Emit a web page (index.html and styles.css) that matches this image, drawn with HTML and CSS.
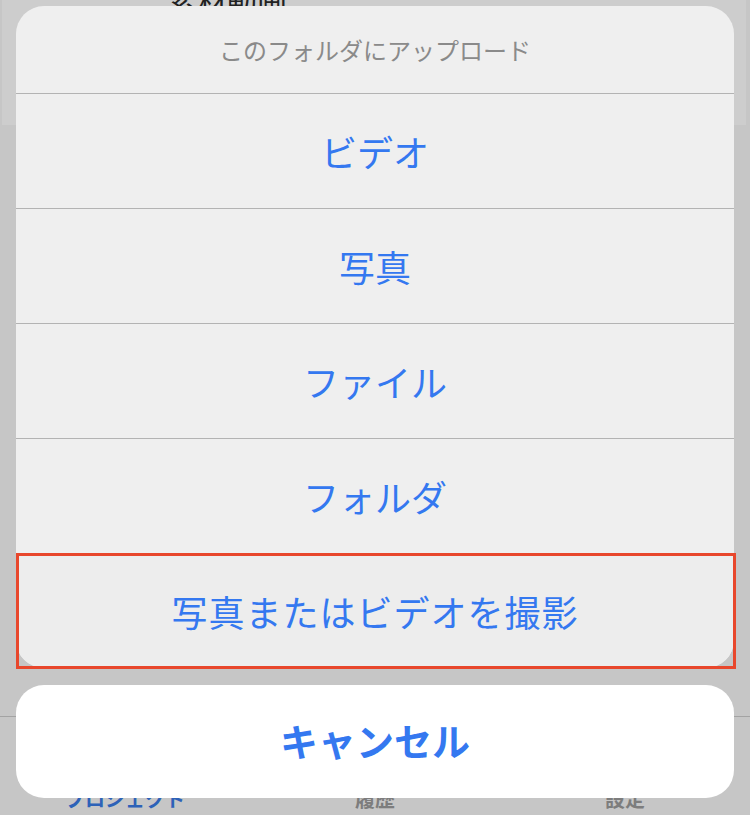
FILE: index.html
```html
<!DOCTYPE html>
<html>
<head>
    <title>アップロード</title>
    <meta name="viewport" content="width=device-width, initial-scale=1.0">
    <link rel="stylesheet" href="styles.css">
</head>
<body>
    <div class="page">
        <div class="top-card">
            <div class="page-title">素材動画</div>
        </div>

        <div class="tab-bar">
            <span class="tab active">プロジェクト</span>
            <span class="tab">履歴</span>
            <span class="tab">設定</span>
        </div>
    </div>

    <!-- action sheet on top of the dimmed page -->
    <div class="sheet-wrap">
        <div class="sheet">
            <div class="sheet-title">このフォルダにアップロード</div>
            <button class="sheet-item">ビデオ</button>
            <button class="sheet-item">写真</button>
            <button class="sheet-item">ファイル</button>
            <button class="sheet-item">フォルダ</button>
            <button class="sheet-item marked">写真またはビデオを撮影</button>
        </div>
        <button class="cancel">キャンセル</button>
    </div>
</body>
</html>
```

FILE: styles.css
```css
* {
    box-sizing: border-box;
    margin: 0;
    padding: 0;
}

body {
    font-family: "Noto Sans CJK JP", "Noto Sans", sans-serif;
    width: 750px;
    height: 815px;
    overflow: hidden;
    background: #c6c6c6;
    position: relative;
}

.page {
    height: 815px;
    display: flex;
    flex-direction: column;
    justify-content: space-between;
}

.top-card {
    margin: 0 4px 0 2px;
    height: 125px;
    background: #cdcdcd;
}

.page-title {
    margin-top: -22px;
    margin-left: 165px;
    font-size: 30px;
    color: #222;
}

.tab-bar {
    height: 99px;
    border-top: 1px solid #a3a3a3;
    display: flex;
    align-items: flex-end;
    padding-bottom: 2px;
}

.tab {
    flex: 1;
    text-align: center;
    font-size: 20px;
    font-weight: bold;
    color: #7d7d7d;
}

.tab.active {
    color: #2d62b8;
}

.sheet-wrap {
    position: absolute;
    top: 6px;
    left: 16px;
    width: 718px;
}

.sheet {
    background: #efefef;
    border-radius: 28px;
}

.sheet-title {
    height: 88px;
    display: flex;
    align-items: center;
    justify-content: center;
    font-size: 24px;
    color: #8a8a8a;
    border-bottom: 1px solid #b3b3b3;
}

button {
    font-family: inherit;
    border: none;
    cursor: pointer;
    width: 100%;
    color: #3478f0;
}

.sheet-item {
    display: block;
    height: 115px;
    font-size: 36px;
    background: transparent;
    border-bottom: 1px solid #b3b3b3;
}

.sheet-item:last-child {
    border-bottom: none;
    height: 114px;
}

.sheet-item.marked {
    position: relative;
    background: #ededed;
    border-radius: 0 0 28px 28px;
    letter-spacing: 1px;
}

/* red annotation frame around the last row */
.sheet-item.marked::after {
    content: "";
    position: absolute;
    top: -1px;
    left: 0;
    right: -2px;
    bottom: -1px;
    border: 3px solid #e8472c;
}

.cancel {
    margin-top: 17px;
    height: 113px;
    padding-bottom: 4px;
    background: #fff;
    border-radius: 28px;
    font-size: 38px;
    font-weight: bold;
}
```
